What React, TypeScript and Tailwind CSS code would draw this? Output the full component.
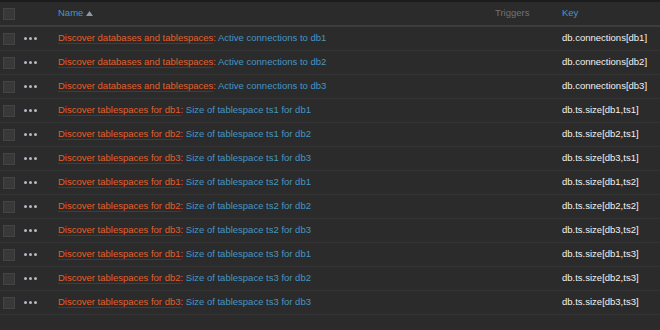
import React from "react";

interface Row {
  parent: string;
  name: string;
  key: string;
}

const rows: Row[] = [
  { parent: "Discover databases and tablespaces", name: "Active connections to db1", key: "db.connections[db1]" },
  { parent: "Discover databases and tablespaces", name: "Active connections to db2", key: "db.connections[db2]" },
  { parent: "Discover databases and tablespaces", name: "Active connections to db3", key: "db.connections[db3]" },
  { parent: "Discover tablespaces for db1", name: "Size of tablespace ts1 for db1", key: "db.ts.size[db1,ts1]" },
  { parent: "Discover tablespaces for db2", name: "Size of tablespace ts1 for db2", key: "db.ts.size[db2,ts1]" },
  { parent: "Discover tablespaces for db3", name: "Size of tablespace ts1 for db3", key: "db.ts.size[db3,ts1]" },
  { parent: "Discover tablespaces for db1", name: "Size of tablespace ts2 for db1", key: "db.ts.size[db1,ts2]" },
  { parent: "Discover tablespaces for db2", name: "Size of tablespace ts2 for db2", key: "db.ts.size[db2,ts2]" },
  { parent: "Discover tablespaces for db3", name: "Size of tablespace ts2 for db3", key: "db.ts.size[db3,ts2]" },
  { parent: "Discover tablespaces for db1", name: "Size of tablespace ts3 for db1", key: "db.ts.size[db1,ts3]" },
  { parent: "Discover tablespaces for db2", name: "Size of tablespace ts3 for db2", key: "db.ts.size[db2,ts3]" },
  { parent: "Discover tablespaces for db3", name: "Size of tablespace ts3 for db3", key: "db.ts.size[db3,ts3]" },
];

const Checkbox = () => (
  <span className="block w-[12px] h-[12px] bg-[#383838] border border-[#444]" />
);

const Dots = () => (
  <span className="flex gap-[2px]">
    <span className="w-[3px] h-[3px] rounded-full bg-[#b0bac6]" />
    <span className="w-[3px] h-[3px] rounded-full bg-[#b0bac6]" />
    <span className="w-[3px] h-[3px] rounded-full bg-[#b0bac6]" />
  </span>
);

export default function App() {
  return (
    <div
      className="w-[660px] h-[330px] bg-[#2b2b2b] text-[9.5px] overflow-hidden"
      style={{ fontFamily: '"Liberation Sans", Arial, sans-serif' }}
    >
      <div className="h-[2px] bg-[#1c1c1c]" />
      <div className="flex items-center h-[25px] border-b-2 border-[#3d3d3d]">
        <div className="w-[58px] pl-[3px]">
          <Checkbox />
        </div>
        <div className="flex-1 flex items-center gap-[3px] text-[#4796c4]">
          Name
          <svg width="7" height="5" viewBox="0 0 7 5">
            <path d="M0 5 L3.5 0 L7 5 Z" fill="#8a9aab" />
          </svg>
        </div>
        <div className="w-[67px] text-[#737373]">Triggers</div>
        <div className="w-[98px] text-[#4796c4]">Key</div>
      </div>
      {rows.map((r, i) => (
        <div key={i} className="flex items-center h-[24px] border-b border-[#333]">
          <div className="w-[24px] pl-[3px]">
            <Checkbox />
          </div>
          <div className="w-[34px]">
            <Dots />
          </div>
          <div className="flex-1 whitespace-nowrap">
            <span className="text-[#e45f2b] border-b border-[#4d3830]">{r.parent}</span>
            <span className="text-[#e45f2b]">: </span>
            <span className="text-[#4796c4]">{r.name}</span>
          </div>
          <div className="w-[67px]" />
          <div className="w-[98px] text-[#f2f2f2] whitespace-nowrap">{r.key}</div>
        </div>
      ))}
    </div>
  );
}
